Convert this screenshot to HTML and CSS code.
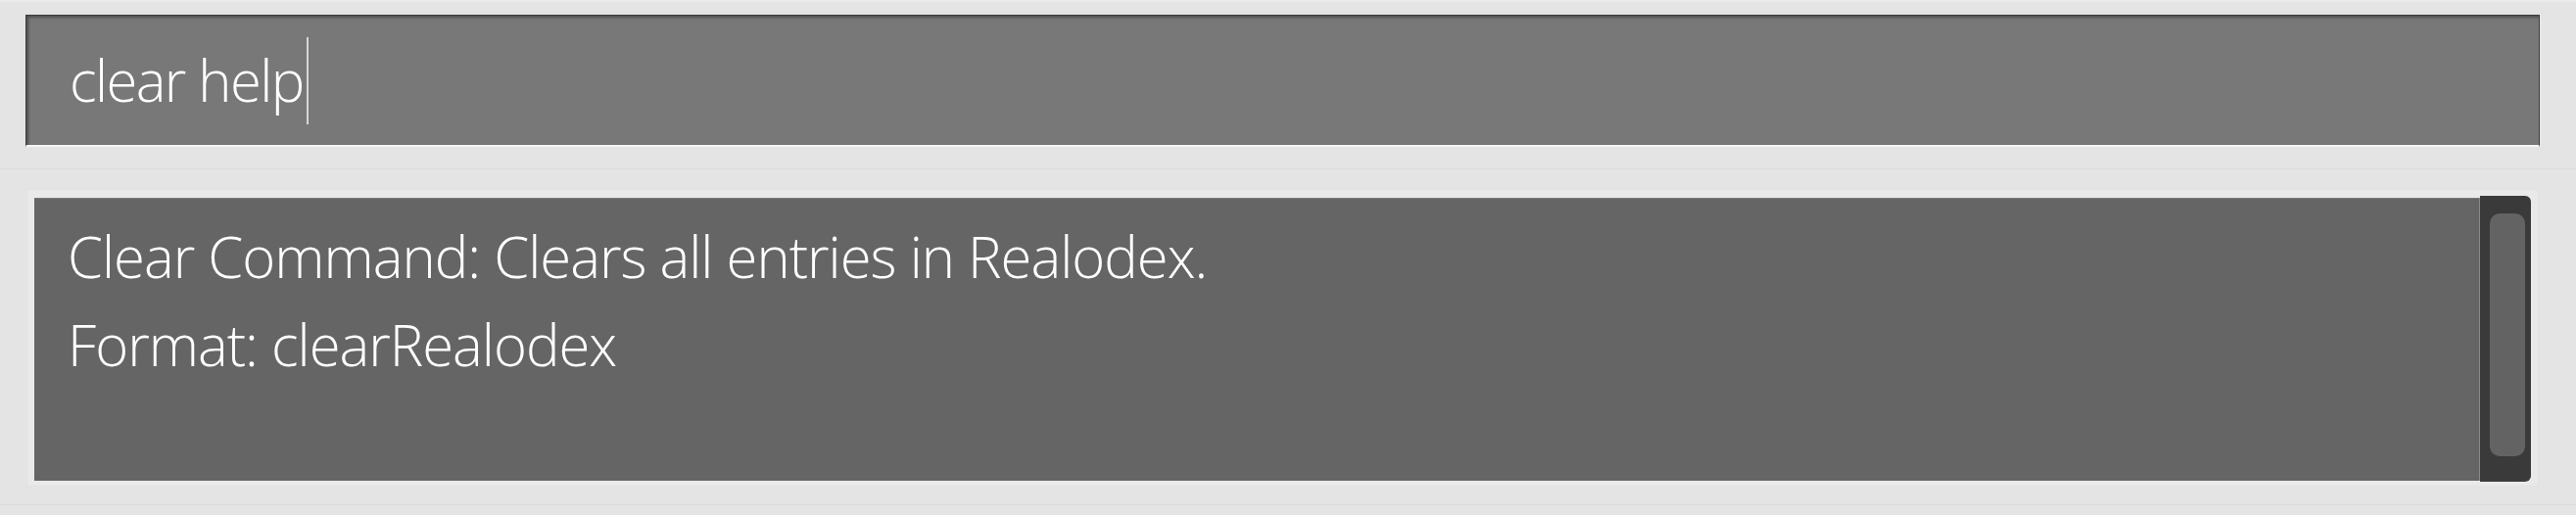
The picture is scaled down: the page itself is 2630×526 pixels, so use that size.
FILE: index.html
```html
<!DOCTYPE html>
<html lang="en">
<head>
<meta charset="utf-8">
<title>Realodex</title>
<link rel="stylesheet" href="styles.css">
</head>
<body>
<div class="app">
  <div class="top-edge"></div>
  <section class="command-pane">
    <div class="command-box">
      <span class="command-text">clear help</span><span class="caret"></span>
    </div>
  </section>
  <div class="divider"></div>
  <section class="result-pane">
    <div class="result-frame">
      <div class="result-display">
        <p class="result-line">Clear Command: Clears all entries in Realodex.</p>
        <p class="result-line">Format: clearRealodex</p>
      </div>
      <div class="scrollbar">
        <div class="scroll-thumb"></div>
      </div>
    </div>
  </section>
  <div class="divider"></div>
</div>
</body>
</html>
```

FILE: styles.css
```css
* { box-sizing: border-box; }

html, body {
  margin: 0;
  padding: 0;
}

body {
  width: 2630px;
  height: 526px;
  background: #e4e4e4;
  overflow: hidden;
  font-family: "Open Sans", "Segoe UI", "Liberation Sans", sans-serif;
  font-weight: 300;
}

.app {
  display: flex;
  flex-direction: column;
  height: 526px;
}

.top-edge {
  height: 2px;
  background: #ebebeb;
}

.command-pane {
  height: 170px;
  padding: 13px 37px 0 26px;
}

.command-box {
  height: 135px;
  background: #787878;
  border: 1px solid #3c3c3c;
  border-bottom: 2px solid #f4f4f4;
  box-shadow: inset 2px 2px 3px rgba(0, 0, 0, 0.35);
  display: flex;
  align-items: center;
  padding-left: 44px;
  color: #ffffff;
}

.command-text {
  font-size: 58px;
  letter-spacing: -1.6px;
  line-height: 1;
  white-space: pre;
}

.caret {
  width: 2px;
  height: 89px;
  background: #d6d6d6;
  margin-left: 3px;
}

.divider {
  height: 1px;
  background: #dadada;
}

.result-pane {
  height: 342px;
  padding: 20px 38px 0 27px;
}

.result-frame {
  height: 304px;
  background: #e9e9e9;
  border: 1px solid #e1e1e1;
  padding: 6px 7px 4px 7px;
  display: flex;
  align-items: center;
}

.result-display {
  flex: 1;
  height: 289px;
  background: #656565;
  border-top: 1px solid #7c7c7c;
  border-right: 1px solid #8a8a8a;
  padding: 14px 0 0 34px;
  color: #ffffff;
}

.result-line {
  margin: 0;
  font-size: 58px;
  letter-spacing: -1px;
  line-height: 90px;
  white-space: pre;
}

.scrollbar {
  width: 52px;
  height: 292px;
  background: #3a3a3a;
  border-radius: 0 6px 6px 0;
  padding: 18px 6px 26px 10px;
}

.scroll-thumb {
  height: 100%;
  background: #636363;
  border-radius: 10px;
}
```
